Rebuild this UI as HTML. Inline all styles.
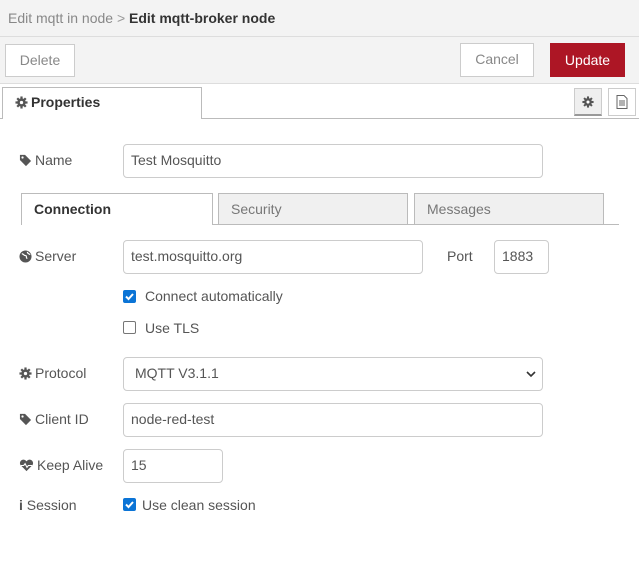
<!DOCTYPE html><html><head><style>
body{margin:0;width:639px;height:564px;background:#fff;font-family:"Liberation Sans",sans-serif;font-size:14px;color:#555;position:relative;overflow:hidden}
.a{position:absolute;box-sizing:border-box}
.hdr{left:0;top:0;width:639px;height:37px;background:#f3f3f3;border-bottom:1px solid #ddd}
.bar{left:0;top:37px;width:639px;height:47px;background:#f3f3f3;border-bottom:1px solid #ddd}
.btn{border:1px solid #ccc;background:#fff;color:#888;text-align:center;line-height:31px}
.inp{border:1px solid #ccc;border-radius:4px;background:#fff;color:#555;padding-left:7px;line-height:31px}
.lbl{color:#555}
.tab{border:1px solid #bbb;border-bottom:none;background:#f0f0f0;color:#777;padding-left:12px;line-height:30px}
.cb{width:13px;height:13px;border-radius:2px}
.cb svg{display:block}
.on{background:#0b74d6}
.off{border:1px solid #767676;background:#fff}
.ic{display:inline-block;vertical-align:-2px;margin-right:3px}
</style></head><body>
<svg width="0" height="0" style="position:absolute">
<defs>
<symbol id="tag" viewBox="0 0 14 14"><path d="M1 1h5.5l6.5 6.5-5.5 5.5L1 6.5z" fill="#555"/><circle cx="3.8" cy="3.8" r="1.2" fill="#fff"/></symbol>
<symbol id="gear" viewBox="0 0 14 14"><g fill="#555"><circle cx="7" cy="7" r="4.5"/><rect x="5.8" y="0.5" width="2.4" height="13"/><rect x="0.5" y="5.8" width="13" height="2.4"/><rect x="5.8" y="0.5" width="2.4" height="13" transform="rotate(45 7 7)"/><rect x="5.8" y="0.5" width="2.4" height="13" transform="rotate(-45 7 7)"/></g><circle cx="7" cy="7" r="1.8" fill="#fff"/></symbol>
</defs></svg>
<div class="a hdr"></div>
<div class="a" style="left:8px;top:10px;color:#888">Edit mqtt in node <span style="color:#999">&gt;</span> <b style="color:#333">Edit mqtt-broker node</b></div>
<div class="a bar"></div>
<div class="a btn" style="left:5px;top:44px;width:70px;height:33px">Delete</div>
<div class="a btn" style="left:460px;top:43px;width:74px;height:34px">Cancel</div>
<div class="a" style="left:550px;top:43px;width:75px;height:34px;background:#ad1625;color:#fff;text-align:center;line-height:34px">Update</div>
<div class="a" style="left:0;top:118px;width:639px;height:1px;background:#bbb"></div>
<div class="a" style="left:2px;top:87px;width:200px;height:32px;background:#fff;border:1px solid #bbb;border-bottom:none;color:#333;font-weight:bold;padding-left:12px;line-height:29px"><svg class="ic" width="13" height="13"><use href="#gear"/></svg>Properties</div>
<div class="a" style="left:574px;top:88px;width:28px;height:28px;background:#efefef;border:1px solid #ccc;border-bottom:2px solid #999"><svg width="12" height="12" style="position:absolute;left:7px;top:7px"><use href="#gear"/></svg></div>
<div class="a" style="left:608px;top:88px;width:28px;height:28px;background:#fff;border:1px solid #ccc"><svg width="12" height="14" style="position:absolute;left:7px;top:6px"><path d="M1 .5h7l3 3v10H1z" fill="none" stroke="#666"/><path d="M3 6h6M3 8h6M3 10h6" stroke="#666"/></svg></div>

<div class="a lbl" style="left:19px;top:152px"><svg class="ic" width="13" height="13"><use href="#tag"/></svg>Name</div>
<div class="a inp" style="left:123px;top:144px;width:420px;height:34px">Test Mosquitto</div>

<div class="a" style="left:21px;top:224px;width:598px;height:1px;background:#bbb"></div>
<div class="a tab" style="left:21px;top:193px;width:192px;height:32px;background:#fff;color:#333;font-weight:bold">Connection</div>
<div class="a tab" style="left:218px;top:193px;width:190px;height:31px">Security</div>
<div class="a tab" style="left:414px;top:193px;width:190px;height:31px">Messages</div>

<div class="a lbl" style="left:19px;top:248px"><svg class="ic" width="13" height="13" viewBox="0 0 14 14"><circle cx="7" cy="7" r="6.5" fill="#555"/><path d="M3 4c2 0 2 2 4 2s0 3 2 3M9 2c0 2 2 2 3 3" stroke="#fff" stroke-width="1.3" fill="none"/></svg>Server</div>
<div class="a inp" style="left:123px;top:240px;width:300px;height:34px">test.mosquitto.org</div>
<div class="a lbl" style="left:447px;top:248px">Port</div>
<div class="a inp" style="left:494px;top:240px;width:55px;height:34px">1883</div>

<div class="a cb on" style="left:123px;top:290px"><svg width="13" height="13"><path d="M3 6.5l2.5 2.5 4.5-5" stroke="#fff" stroke-width="2" fill="none"/></svg></div>
<div class="a" style="left:145px;top:288px">Connect automatically</div>
<div class="a cb off" style="left:123px;top:321px"></div>
<div class="a" style="left:145px;top:320px">Use TLS</div>

<div class="a lbl" style="left:19px;top:365px"><svg class="ic" width="13" height="13"><use href="#gear"/></svg>Protocol</div>
<div class="a inp" style="left:123px;top:357px;width:420px;height:34px;padding-left:11px">MQTT V3.1.1<svg class="a" style="right:6px;top:12px" width="10" height="8"><path d="M1 2l4 4 4-4" stroke="#333" stroke-width="1.6" fill="none"/></svg></div>

<div class="a lbl" style="left:19px;top:411px"><svg class="ic" width="13" height="13"><use href="#tag"/></svg>Client ID</div>
<div class="a inp" style="left:123px;top:403px;width:420px;height:34px">node-red-test</div>

<div class="a lbl" style="left:19px;top:457px"><svg class="ic" width="15" height="13" viewBox="0 0 16 14"><path d="M8 13L1.5 6.5A3.5 3.5 0 0 1 8 2.5 3.5 3.5 0 0 1 14.5 6.5z" fill="#555"/><path d="M2 7h3l1.5-2 2 4 1.5-2h4" stroke="#fff" stroke-width="1.2" fill="none"/></svg>Keep Alive</div>
<div class="a inp" style="left:123px;top:449px;width:100px;height:34px">15</div>

<div class="a lbl" style="left:19px;top:497px"><b>i</b> Session</div>
<div class="a cb on" style="left:123px;top:498px"><svg width="13" height="13"><path d="M3 6.5l2.5 2.5 4.5-5" stroke="#fff" stroke-width="2" fill="none"/></svg></div>
<div class="a" style="left:142px;top:497px">Use clean session</div>
</body></html>
